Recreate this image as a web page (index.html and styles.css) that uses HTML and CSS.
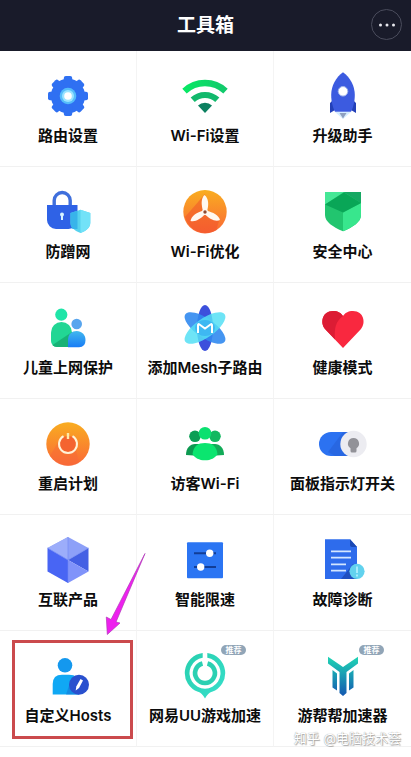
FILE: index.html
```html
<!DOCTYPE html>
<html lang="zh-CN">
<head>
<meta charset="utf-8">
<meta name="viewport" content="width=device-width, initial-scale=1">
<title>工具箱</title>
<link rel="stylesheet" href="styles.css">
</head>
<body>
<header class="topbar">
  <h1>工具箱</h1>
  <button class="more" type="button" aria-label="更多">
    <svg width="18" height="4" viewBox="0 0 18 4"><g fill="#e8e8ee"><circle cx="2.5" cy="2" r="1.5"/><circle cx="9" cy="2" r="1.5"/><circle cx="15.5" cy="2" r="1.5"/></g></svg>
  </button>
</header>

<main class="tools">
  <a class="tool" href="#">
    <svg class="icon" viewBox="0 0 48 48">
      <g fill="#2f70f2">
        <circle cx="24" cy="24" r="17.2"/>
        <g id="teeth"><rect x="19.8" y="4" width="8.4" height="40" rx="2"/><rect x="4" y="19.8" width="40" height="8.4" rx="2"/></g>
        <use href="#teeth" transform="rotate(45 24 24)"/>
      </g>
      <circle cx="24" cy="24" r="8.3" fill="#55bdfb"/>
      <circle cx="24" cy="24" r="6" fill="#9be4ff"/>
      <circle cx="24" cy="24" r="3.8" fill="#fff"/>
    </svg>
    <span>路由设置</span>
  </a>

  <a class="tool" href="#">
    <svg class="icon" viewBox="0 0 48 48">
      <defs><linearGradient id="wifi"><stop offset="0" stop-color="#08e864"/><stop offset="1" stop-color="#12c96c"/></linearGradient></defs>
      <path d="M3.5 19.1A30 30 0 0 1 44.5 19.1" fill="none" stroke="url(#wifi)" stroke-width="6.4"/>
      <path d="M11.7 27.8A18 18 0 0 1 36.3 27.8" fill="none" stroke="#12b96c" stroke-width="6"/>
      <path d="M17 33.5A10 10 0 0 1 31 33.5L24 41Z" fill="#0c8060"/>
    </svg>
    <span>Wi-Fi设置</span>
  </a>

  <a class="tool" href="#">
    <svg class="icon" viewBox="0 0 48 48">
      <path d="M16 40H32L24 47Z" fill="#d5ecff"/>
      <path d="M20.5 41H27.5L24 46.5Z" fill="#8fa0c0"/>
      <path d="M14 28L11 31V41L16 38ZM34 28L37 31V41L32 38Z" fill="#2340b8"/>
      <path d="M24 .3C31 5 35.8 14 35.8 23C35.8 30 34 36 32 39.7H16C14 36 12.2 30 12.2 23C12.2 14 17 5 24 .3Z" fill="#3c5be0"/>
      <circle cx="24" cy="19.3" r="4.8" fill="#fff" stroke="#9fb2ea"/>
    </svg>
    <span>升级助手</span>
  </a>

  <a class="tool" href="#">
    <svg class="icon" viewBox="0 0 48 48">
      <path d="M10.5 18V12.5a8 8 0 0 1 16 0V18" transform="translate(-.3 0)" fill="none" stroke="#3f6fdc" stroke-width="3.4"/>
      <path d="M3 17H33.5V32a9 9 0 0 1-9 9H12a9 9 0 0 1-9-9Z" fill="#2f62e6"/>
      <circle cx="18" cy="26.5" r="2" fill="#d6f3ff"/><path d="M17 26h2v6h-2z" fill="#d6f3ff"/>
      <path d="M36.5 21.7L46.3 25V35C46.3 40 41 43.5 36.5 45C32 43.5 26.5 40 26.5 35V25Z" fill="#56d2ee"/>
      <path d="M36.5 21.7L46.3 25V35C46.3 40 41 43.5 36.5 45Z" fill="#72e2f8"/>
      <path d="M26.5 25L33.5 22.7V41H28.5C27 39 26.5 37 26.5 35Z" fill="#38b4ea"/>
    </svg>
    <span>防蹭网</span>
  </a>

  <a class="tool" href="#">
    <svg class="icon" viewBox="0 0 48 48">
      <defs><linearGradient id="orange" x1="0" y1="0" x2="0" y2="1"><stop offset="0" stop-color="#f9ad20"/><stop offset="1" stop-color="#fa6836"/></linearGradient></defs>
      <circle cx="24" cy="23.7" r="21.7" fill="url(#orange)"/>
      <path d="M24 6L4 29A21.7 21.7 0 0 0 35 42.5L38 33L26 24Z" fill="#f0502a" opacity=".5"/>
      <g fill="#fff8f0">
        <path id="blade" d="M22.2 23.5C20 17 20 10 23.5 7C27.500 10 28.200 17 25.8 23.5Z"/>
        <use href="#blade" transform="rotate(120 24 24)"/><use href="#blade" transform="rotate(240 24 24)"/>
        <circle cx="24" cy="24" r="3"/>
      </g>
      <circle cx="24" cy="24" r="1.7" fill="#8d4a32"/>
    </svg>
    <span>Wi-Fi优化</span>
  </a>

  <a class="tool" href="#">
    <svg class="icon" viewBox="0 0 48 48">
      <path d="M6 4H42V27C42 34 34 39 24 43.3C14 39 6 34 6 27Z" fill="#22c56f"/>
      <path d="M24 24.5L42 15V27C42 34 34 39 24 43.3Z" fill="#38e68d"/>
      <path d="M6 4H25L6 16.5Z" fill="#45e796"/>
      <path d="M25 4H42V15Z" fill="#16a863"/>
      <path d="M6 16.5L25 4.5L42 15L24 24.5Z" fill="#09a657"/>
    </svg>
    <span>安全中心</span>
  </a>

  <a class="tool" href="#">
    <svg class="icon" viewBox="0 0 48 48">
      <defs><linearGradient id="kid" x1="0" y1="0" x2="0" y2="1"><stop offset="0" stop-color="#42b8ee"/><stop offset="1" stop-color="#187cf6"/></linearGradient></defs>
      <circle cx="17.3" cy="10.7" r="6.1" fill="#1fe5a8"/>
      <circle cx="32.7" cy="20" r="5.3" fill="#58a5ee"/>
      <path d="M7 28.5a10.5 10.5 0 0 1 21 0V43H13a6 6 0 0 1-6-6Z" fill="#22d694"/>
      <path d="M8.5 41L28 28V43H13Q10 43 8.5 41Z" fill="#18b276"/>
      <path d="M24 43.3V36C24 30 28 27 32.700 27S41.500 30.500 41.500 36Q41.500 43.300 35 43.300Z" fill="url(#kid)"/>
    </svg>
    <span>儿童上网保护</span>
  </a>

  <a class="tool" href="#">
    <svg class="icon" viewBox="0 0 48 48">
      <ellipse cx="24" cy="24" rx="8" ry="23" fill="#3c50dc"/>
      <ellipse cx="24" cy="24" rx="9.5" ry="24" fill="#318af0" opacity=".9" transform="rotate(-55 24 24)"/>
      <ellipse cx="24" cy="24" rx="9.5" ry="24" fill="#55dff5" opacity=".85" transform="rotate(55 24 24)"/>
      <ellipse cx="24" cy="24" rx="10" ry="8" fill="#2d9df0" opacity=".5"/>
      <path d="M17 29V21Q17 19.5 18.5 20.5L24 24.5L29.5 20.5Q31 19.5 31 21V29" fill="none" stroke="#fff" stroke-width="2"/>
    </svg>
    <span>添加Mesh子路由</span>
  </a>

  <a class="tool" href="#">
    <svg class="icon" viewBox="0 0 48 48">
      <path d="M24 44L6 25C1 19 3 7 14 7C19 7 22 9 24 12C26 9 29 7 34 7C45 7 47 19 42 25Z" fill="#f9283f"/>
      <path d="M24 12C22 9 19 7 14 7C3 7 1 19 6 25L16 35.5C15 24 17 17 24 12Z" fill="#dc1c34"/>
    </svg>
    <span>健康模式</span>
  </a>

  <a class="tool" href="#">
    <svg class="icon" viewBox="0 0 48 48">
      <circle cx="24" cy="24" r="21.7" fill="url(#orange)"/>
      <path d="M17 17L6 36A21.7 21.7 0 0 0 35 43L32 30Z" fill="#f7683a" opacity=".45"/>
      <circle cx="24" cy="24" r="8" fill="#f46430"/>
      <path d="M19.5 16.2A9 9 0 1 0 28.5 16.2" fill="none" stroke="#fff3d8" stroke-width="2"/>
      <path d="M24 13V19" stroke="#ffe9a8" stroke-width="2.4"/>
    </svg>
    <span>重启计划</span>
  </a>

  <a class="tool" href="#">
    <svg class="icon" viewBox="0 0 48 48">
      <circle cx="14" cy="16.3" r="5.8" fill="#0a9e54"/><circle cx="34" cy="16.3" r="5.8" fill="#12b860"/>
      <path d="M5 35C5 28 9 24 14 24H20V36Z" fill="#0c9950"/><path d="M43 35C43 28 39 24 34 24H28V36Z" fill="#12ab58"/>
      <circle cx="24" cy="13.3" r="6.3" fill="#0be070"/>
      <path d="M11.5 34C12.5 26 17 23 24 23S35.5 26 36.5 34C34 38 30 40.3 24 40.3S14 38 11.5 34Z" fill="#0be56f"/>
    </svg>
    <span>访客Wi-Fi</span>
  </a>

  <a class="tool" href="#">
    <svg class="icon" viewBox="0 0 48 48">
      <rect y="12" width="46" height="24" rx="12" fill="#2c72f1"/>
      <path d="M9 32L24 12H36V36H16Z" fill="#2258cc" opacity=".4"/>
      <circle cx="34.5" cy="24" r="13.2" fill="#ececf1"/>
      <path d="M34.5 18a5.6 5.6 0 0 1 3 10.3V31Q37.500 32.5 36 32.5H33Q31.5 32.5 31.5 31V28.3A5.6 5.6 0 0 1 34.5 18Z" fill="#929298"/>
    </svg>
    <span>面板指示灯开关</span>
  </a>

  <a class="tool" href="#">
    <svg class="icon" viewBox="0 0 48 48">
      <path d="M24 1L44.5 12L24 24L3.5 12Z" fill="#8da0f8"/>
      <path d="M24 1V24L3.5 12Z" fill="#9cadfa"/>
      <path d="M3.5 12L24 24V47L3.5 35.5Z" fill="#4865f4"/>
      <path d="M24 24L44.5 12V35.5Z" fill="#4460e4"/>
      <path d="M24 24L44.5 35.5L24 47Z" fill="#8093fa"/>
      <path d="M3.5 12L24 24L44.5 12M24 1V47" fill="none" stroke="#7188f4" stroke-width=".6"/>
    </svg>
    <span>互联产品</span>
  </a>

  <a class="tool" href="#">
    <svg class="icon" viewBox="0 0 48 48">
      <rect x="6" y="6.3" width="36" height="36" rx="1" fill="#2b75f3"/>
      <path d="M13 17.3H35M13 31H35" stroke="#123d96" stroke-width="2"/>
      <circle cx="28.7" cy="17.3" r="3.7" fill="#fff"/><circle cx="19.7" cy="31" r="3.7" fill="#fff"/>
    </svg>
    <span>智能限速</span>
  </a>

  <a class="tool" href="#">
    <svg class="icon" viewBox="0 0 48 48">
      <path d="M6 3.3H31L38 11V43H6Z" fill="#2e6cec"/>
      <path d="M31 3.3L38 11H33Q31 11 31 9Z" fill="#1b49b4"/>
      <path d="M22 43L34 28L38 30V43Z" fill="#1f4fc0"/>
      <path d="M12 15.3H32M12 21.7H32M12 28.3H27M12 34.7H27" stroke="#d3e6ff" stroke-width="1.8"/>
      <circle cx="38" cy="35.3" r="7.6" fill="#62d2ee"/>
      <path d="M38 30.5V37M38 38.5V40.5" stroke="#b9f3ff" stroke-width="1.6"/>
    </svg>
    <span>故障诊断</span>
  </a>

  <a class="tool" href="#">
    <svg class="icon" viewBox="0 0 48 48">
      <circle cx="21" cy="13.3" r="7.3" fill="#1498ee"/>
      <path d="M8.7 42.5V32Q8.7 22.7 18 22.7H25Q35 22.7 35 32V42.5Z" fill="#10a8f4"/>
      <path d="M22 42.5L28 25L35 29V42.5Z" fill="#1680dc" opacity=".7"/>
      <circle cx="35" cy="32.7" r="10" fill="#2950ce"/>
      <path d="M36.5 27L39 28.5L35 36L31.7 38.5L32.3 34.5Z" fill="#fff"/>
    </svg>
    <span>自定义Hosts</span>
    <i class="frame"></i>
    <svg class="arrow" width="42" height="84" viewBox="0 0 42 84"><path d="M40 1.500L11 70L15 71L2.300 82.500L1.300 65L6 67.500Z" fill="#ee20ee" stroke="#b03ab8" stroke-width=".7"/></svg>
  </a>

  <a class="tool" href="#">
    <svg class="icon" viewBox="0 0 48 48">
      <defs><linearGradient id="uu" x1="0" y1="0" x2="1" y2="1"><stop offset="0" stop-color="#27cfae"/><stop offset="1" stop-color="#37dfcb"/></linearGradient></defs>
      <path d="M21.7 1.1A20 20 0 0 0 17 39.8Q21 41 24 46.5Q27 41 31 39.8A20 20 0 0 0 26.3 1.1V5.8A15.5 15.5 0 1 1 21.7 5.8Z" fill="url(#uu)"/>
      <path d="M21.5 11.5A9.9 9.9 0 1 0 26.5 11.5" fill="none" stroke="#2bd0b2" stroke-width="4.6"/>
    </svg>
    <span>网易UU游戏加速</span>
    <em class="badge">推荐</em>
  </a>

  <a class="tool" href="#">
    <svg class="icon" viewBox="0 0 48 48">
      <defs><linearGradient id="ybb" gradientUnits="userSpaceOnUse" x1="0" y1="5" x2="0" y2="44"><stop offset="0" stop-color="#20d4b4"/><stop offset=".4" stop-color="#1aa3b4"/><stop offset="1" stop-color="#1457b0"/></linearGradient></defs>
      <g fill="url(#ybb)">
        <path d="M9 4.7L24 15L39 4.7V11.5L27.5 20V41L24 44L20.5 41V20L9 11.5Z"/>
        <path d="M13.5 18L18 21.5V38.5L13.5 35.5ZM34.5 18L30 21.5V38.5L34.5 35.5Z"/>
      </g>
    </svg>
    <span>游帮帮加速器</span>
    <em class="badge">推荐</em>
    <small class="watermark">知乎 @电脑技术荟</small>
  </a>
</main>
</body>
</html>
```

FILE: styles.css
```css
body {
  margin: 0;
  background: #fff;
  color: #0c0c0c;
  font-family: Inter, "Noto Sans CJK SC", sans-serif;
}

.topbar {
  position: relative;
  display: flex;
  align-items: center;
  justify-content: center;
  height: 51px;
  background: #191b2a;
}
.topbar h1 {
  margin: 0;
  color: #fff;
  font-size: 19px;
  line-height: 28px;
  font-weight: 700;
}
.more {
  position: absolute;
  right: 9px;
  top: 9px;
  display: flex;
  align-items: center;
  justify-content: center;
  width: 31px;
  height: 31px;
  padding: 0;
  border: 1px solid #4a4c5c;
  border-radius: 50%;
  background: none;
}

.tools {
  display: grid;
  grid-template-columns: repeat(3, 1fr);
}
.tool {
  position: relative;
  display: flex;
  flex-direction: column;
  align-items: center;
  gap: 5px;
  padding: 21px 0 19px;
  border-right: 1px solid #f4f4f4;
  border-bottom: 1px solid #f1f1f1;
  color: inherit;
  font-size: 15px;
  line-height: 22px;
  font-weight: 600;
  text-decoration: none;
  white-space: nowrap;
}
.tool:nth-child(3n) { border-right: 0; }
.icon { width: 48px; height: 48px; }

.badge {
  position: absolute;
  top: 14px;
  right: 27px;
  width: 25px;
  border-radius: 5px;
  background: #91a5b7;
  color: #fff;
  font-size: 8px;
  line-height: 10px;
  font-style: normal;
  text-align: center;
}

/* highlight on the custom hosts entry */
.frame {
  position: absolute;
  inset: 9px 3px 7px 12px;
  border: 3px solid #cb4a4d;
}
.arrow {
  position: absolute;
  left: 105px;
  top: -79px;
  z-index: 1;
}

.watermark {
  position: absolute;
  right: 10px;
  bottom: -2px;
  color: #fff;
  font-size: 13px;
  line-height: 20px;
  font-weight: 400;
  text-shadow: 0 0 1px #888, 1px 1px 1px #aaa;
}
```
